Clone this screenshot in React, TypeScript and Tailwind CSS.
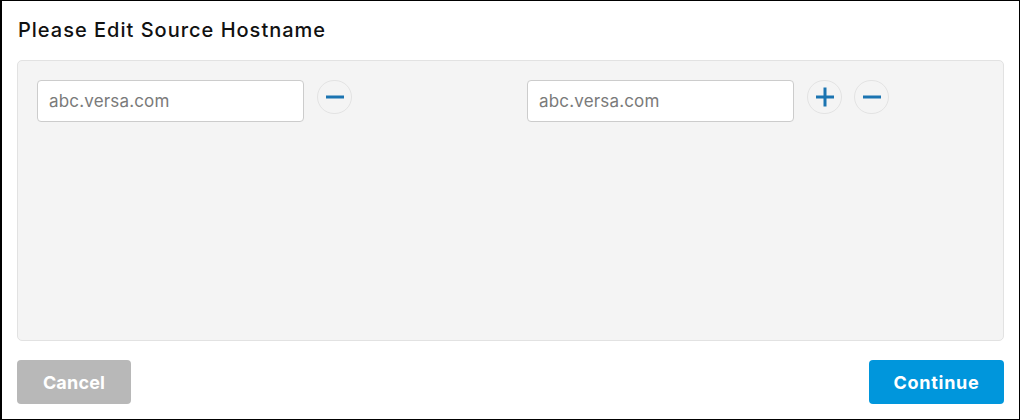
import React from "react";

function Minus() {
  return (
    <svg width="20" height="20" viewBox="0 0 20 20">
      <rect x="1" y="8.5" width="18" height="3" fill="#1b74b1" />
    </svg>
  );
}
function Plus() {
  return (
    <svg width="20" height="20" viewBox="0 0 20 20">
      <rect x="1" y="8.5" width="18" height="3" fill="#1b74b1" />
      <rect x="8.5" y="0.5" width="3" height="19" fill="#1b74b1" />
    </svg>
  );
}

function CircleBtn({ children }: { children: React.ReactNode }) {
  return (
    <button className="flex h-[34px] w-[35px] shrink-0 items-center justify-center rounded-full border border-[#e3e3e3] bg-[#f4f4f4]">
      {children}
    </button>
  );
}

function Field() {
  return (
    <input
      placeholder="abc.versa.com"
      className="h-[42px] w-[267px] rounded-[4px] border border-[#cccccc] bg-white px-[11px] text-[17px] tracking-[0.01em] text-[#333] placeholder:text-[#7a7a7a] outline-none"
      style={{ fontFamily: "Inter, 'Open Sans', sans-serif" }}
    />
  );
}

export default function App() {
  return (
    <div
      className="flex h-[420px] w-[1020px] flex-col border border-l-2 border-black bg-white"
      style={{ fontFamily: "Inter, 'Open Sans', sans-serif" }}
    >
      <div className="px-[16px] pt-[16px] text-[20px] font-medium leading-[26px] tracking-[0.05em] text-[#111]">
        Please Edit Source Hostname
      </div>
      <div className="mx-[15px] mt-[17px] h-[281px] rounded-[5px] border border-[#e2e2e2] bg-[#f4f4f4] px-[19px] pt-[19px]">
        <div className="flex">
          <div className="flex w-[490px] items-start gap-[13px]">
            <Field />
            <CircleBtn>
              <Minus />
            </CircleBtn>
          </div>
          <div className="flex items-start gap-[13px]">
            <Field />
            <div className="flex gap-[12px]">
              <CircleBtn>
                <Plus />
              </CircleBtn>
              <CircleBtn>
                <Minus />
              </CircleBtn>
            </div>
          </div>
        </div>
      </div>
      <div className="mx-[15px] mt-[19px] flex justify-between">
        <button className="h-[44px] w-[114px] rounded-[4px] bg-[#b8b8b8] text-[18px] font-bold tracking-[0.01em] text-white">
          Cancel
        </button>
        <button className="h-[44px] w-[135px] rounded-[4px] bg-[#0096dc] text-[18px] font-bold tracking-[0.04em] text-white">
          Continue
        </button>
      </div>
    </div>
  );
}
